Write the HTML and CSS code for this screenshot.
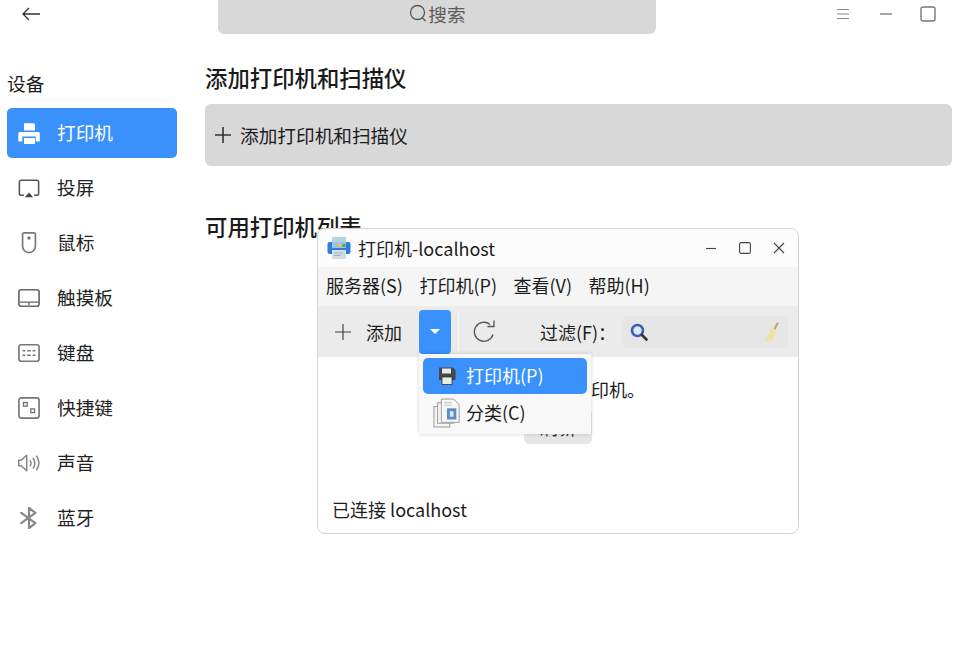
FILE: index.html
```html
<!DOCTYPE html>
<html lang="zh-CN">
<head>
<meta charset="utf-8">
<title>打印机</title>
<link rel="stylesheet" href="styles.css">
</head>
<body>
<div class="app">
  <aside class="sidebar">
    <div class="side-top">
      <svg class="back" viewBox="0 0 20 16" width="20" height="16"><path d="M19 8H2M8 2 2 8l6 6" fill="none" stroke="#333" stroke-width="1.300"/></svg>
    </div>
    <div class="side-title">设备</div>
    <nav class="nav">
      <a class="nav-item active">
        <svg class="nav-icon" viewBox="0 0 22 22"><path d="M6 1.300h10l1 1v6.200H6z" fill="#fff"/><path d="M1.800 10h18.500a1.500 1.500 0 0 1 1.500 1.500v8h-4v-5H4.300v5H.300v-8A1.500 1.500 0 0 1 1.800 10z" fill="#fff"/><rect x="6" y="16" width="11" height="6" fill="#fff"/></svg>
        <span>打印机</span>
      </a>
      <a class="nav-item">
        <svg class="nav-icon" viewBox="0 0 24 24"><path d="M6.500 20H3.500A2 2 0 0 1 1.500 18V5.500a2 2 0 0 1 2-2h17a2 2 0 0 1 2 2V18a2 2 0 0 1-2 2H17.500" fill="none" stroke="#555" stroke-width="1.700"/><path d="M12 17l4.500 5h-9z" fill="#444"/></svg>
        <span>投屏</span>
      </a>
      <a class="nav-item">
        <svg class="nav-icon" viewBox="0 0 24 24"><path d="M6.500 1h11a1.500 1.500 0 0 1 1.500 1.500v13a7 7 0 0 1-14 0v-13A1.500 1.500 0 0 1 6.500 1z" fill="none" stroke="#777" stroke-width="1.800"/><circle cx="12" cy="6.500" r="1.900" fill="#777"/></svg>
        <span>鼠标</span>
      </a>
      <a class="nav-item">
        <svg class="nav-icon" viewBox="0 0 24 24"><rect x="1" y="3" width="22" height="18" rx="2.500" fill="none" stroke="#666" stroke-width="1.800"/><path d="M2 16.500h20M12 16.500v3.500" stroke="#666" stroke-width="1.500"/></svg>
        <span>触摸板</span>
      </a>
      <a class="nav-item">
        <svg class="nav-icon" viewBox="0 0 24 24"><rect x="1" y="3" width="22" height="18" rx="2.500" fill="none" stroke="#777" stroke-width="1.800"/><path d="M5 9.500h3M10 9.500h4M16 9.500h3M5 14.500h3M10 14.500h4M16 14.500h3" stroke="#777" stroke-width="1.600"/></svg>
        <span>键盘</span>
      </a>
      <a class="nav-item">
        <svg class="nav-icon" viewBox="0 0 24 24"><rect x="1" y="1" width="22" height="22" rx="2.500" fill="none" stroke="#777" stroke-width="1.800"/><rect x="6" y="6" width="4" height="4" fill="none" stroke="#777" stroke-width="1.500"/><rect x="14" y="13" width="4" height="4" fill="none" stroke="#777" stroke-width="1.500"/></svg>
        <span>快捷键</span>
      </a>
      <a class="nav-item">
        <svg class="nav-icon" viewBox="0 0 24 24"><path d="M.800 9v6h2.700l6 5.500v-17L3.500 9z" fill="none" stroke="#888" stroke-width="1.700" stroke-linejoin="round"/><path d="M13 9c1.400 2 1.400 4.500 0 6.500M16.300 6.500c2.500 3.500 2.500 8 0 11.500M20 4c3.500 5 3.500 11 0 16" fill="none" stroke="#888" stroke-width="1.700"/></svg>
        <span>声音</span>
      </a>
      <a class="nav-item">
        <svg class="nav-icon" viewBox="0 0 24 24"><path d="M3.500 6.500 19 17.500 12 23V1l7 5.500L3.500 17.500" fill="none" stroke="#888" stroke-width="2.400" stroke-linejoin="round" stroke-linecap="round"/></svg>
        <span>蓝牙</span>
      </a>
    </nav>
  </aside>

  <main class="content">
    <header class="topbar">
      <div class="search">
        <svg viewBox="0 0 20 20" width="20" height="20"><circle cx="9.500" cy="9.500" r="7" fill="none" stroke="#555" stroke-width="1.300"/><path d="M14.500 15l3 3" stroke="#555" stroke-width="1.300"/></svg>
        <span>搜索</span>
      </div>
      <div class="win-controls">
        <svg viewBox="0 0 14 12" width="14" height="12"><path d="M1 1.500h12M1 6h12M1 10.500h12" stroke="#888" stroke-width="1.200"/></svg>
        <svg viewBox="0 0 14 12" width="14" height="12"><path d="M1 6h12" stroke="#777" stroke-width="1.300"/></svg>
        <svg viewBox="0 0 16 16" width="16" height="16"><rect x="1" y="1" width="14" height="14" rx="2" fill="none" stroke="#777" stroke-width="1.400"/></svg>
      </div>
    </header>
    <section class="panel">
      <h2 class="section-title">添加打印机和扫描仪</h2>
      <button class="add-button">
        <svg viewBox="0 0 16 16" width="16" height="16"><path d="M8 0v16M0 8h16" stroke="#333" stroke-width="1.600"/></svg>
        <span>添加打印机和扫描仪</span>
      </button>
      <h2 class="section-title list-title">可用打印机列表</h2>
    </section>
  </main>
</div>

<div class="window">
  <div class="titlebar">
    <svg class="app-icon" viewBox="0 0 24 24" width="24" height="24">
      <rect x="5" y="1" width="14" height="6" fill="#b5d3e6"/>
      <path d="M2.500 6h19A2 2 0 0 1 23.500 8v8a2 2 0 0 1-2 2h-19a2 2 0 0 1-2-2V8a2 2 0 0 1 2-2z" fill="#2f7fd8"/>
      <rect x="5" y="6" width="14" height="6" fill="#9cc3e6"/>
      <rect x="11" y="8" width="3.500" height="3" fill="#f0c040"/><rect x="15" y="8" width="3.500" height="3" fill="#45b36b"/>
      <rect x="5" y="14" width="14" height="9" fill="#d3dde4"/>
      <path d="M7 17h9M7 19.500h7" stroke="#9fb2c0" stroke-width="1"/>
    </svg>
    <span class="window-title">打印机-localhost</span>
    <div class="window-buttons">
      <svg viewBox="0 0 12 12" width="12" height="12"><path d="M1 6.500h10" stroke="#444" stroke-width="1.100"/></svg>
      <svg viewBox="0 0 12 12" width="12" height="12"><rect x=".6" y=".6" width="10.800" height="10.800" rx="1.500" fill="none" stroke="#444" stroke-width="1.100"/></svg>
      <svg viewBox="0 0 12 12" width="12" height="12"><path d="M1 1l10 10M11 1 1 11" stroke="#444" stroke-width="1.100"/></svg>
    </div>
  </div>
  <div class="menubar">
    <span>服务器(S)</span><span>打印机(P)</span><span>查看(V)</span><span>帮助(H)</span>
  </div>
  <div class="toolbar">
    <svg class="tool-plus" viewBox="0 0 16 16" width="16" height="16"><path d="M8 0v16M0 8h16" stroke="#444" stroke-width="1.200"/></svg>
    <span class="tool-add">添加</span>
    <div class="drop-button"><i class="caret"></i></div>
    <div class="tool-sep"></div>
    <svg class="tool-refresh" viewBox="0 0 24 24" width="24" height="24"><path d="M20 14.500A9.500 9.500 0 1 1 17 4.500" fill="none" stroke="#555" stroke-width="1.300"/><path d="M14.500 6.500H21V0.500" fill="none" stroke="#555" stroke-width="1.300"/></svg>
    <span class="filter-label">过滤(F)：</span>
    <div class="filter-box">
      <svg viewBox="0 0 18 18" width="18" height="18"><circle cx="7.500" cy="7.500" r="5.500" fill="#dbe6f7" stroke="#3a5fb0" stroke-width="2.600"/><path d="M12 12l4.500 4.500" stroke="#333" stroke-width="2.600" stroke-linecap="round"/></svg>
      <svg viewBox="0 0 18 20" width="18" height="20"><path d="M12.500 7 15.500 1.500" stroke="#c9a878" stroke-width="2.400" stroke-linecap="round"/><path d="M9.500 5.500c2 0 4 2 4.500 3.500-.5 4-3 8-4 9-2 .5-6 .5-8 0 3-2.500 5-5 7.500-12.500z" fill="#efe3a0"/></svg>
    </div>
  </div>
  <div class="window-body">
    <div class="empty-text">没有配置打印机。</div>
    <button class="refresh-button">刷新</button>
    <div class="status">已连接 localhost</div>
  </div>
  <div class="popup">
    <div class="popup-item selected">
      <svg viewBox="0 0 20 20" width="20" height="20"><path d="M2 1.500h14l2.500 2.500v10H2z" fill="#44484c"/><rect x="5" y="2.500" width="9" height="5" fill="#e8e8e8"/><rect x="5" y="11" width="10" height="7.500" fill="#e6f0de" stroke="#333" stroke-width=".8"/></svg>
      <span>打印机(P)</span>
    </div>
    <div class="popup-item">
      <svg class="docs" viewBox="0 0 30 32" width="28" height="30"><rect x="1" y="9" width="17" height="22" fill="#f4f4f4" stroke="#999"/><rect x="5" y="5" width="17" height="22" fill="#f4f4f4" stroke="#999"/><path d="M9 1h13l6 6v19H9z" fill="#f6f6f6" stroke="#999"/><path d="M12 5h8M12 7.500h8" stroke="#bbb"/><rect x="15" y="11" width="10" height="12" fill="#5b8cc4"/><rect x="18" y="14" width="4" height="6" fill="#dbe6f2"/></svg>
      <span>分类(C)</span>
    </div>
  </div>
</div>
</body>
</html>
```
FILE: styles.css
```css
* { box-sizing: border-box; }
html, body { margin: 0; height: 100%; overflow: hidden; background: #fff; }
body {
  font-family: "Noto Sans CJK SC", "Noto Sans", sans-serif;
  color: #1c1c1c;
  width: 957px;
  height: 655px;
  position: relative;
}
.app { display: flex; height: 655px; }
.sidebar { width: 205px; padding-left: 7px; flex: none; }
.side-top { height: 70px; padding: 6px 0 0 14px; }
.back { display: block; }
.side-title { font-size: 18.67px; line-height: 28px; margin-top: -1px; margin-bottom: 11px; }
.nav { display: flex; flex-direction: column; gap: 5px; width: 170px; }
.nav-item {
  display: flex; align-items: center; height: 50px; border-radius: 5px;
  padding-left: 11px; gap: 17px; font-size: 18.67px; color: #222;
}
.nav-item span { line-height: 26px; margin-bottom: 2px; }
.nav-item.active { background: #3a91fb; color: #fff; }
.nav-icon { width: 22px; height: 22px; flex: none; }
.content { flex: 1; min-width: 0; }
.topbar { display: flex; height: 64px; align-items: flex-start; }
.search {
  width: 438px; height: 34px; margin-left: 13px; margin-right: 180px;
  background: #d8d8d8; border-radius: 0 0 6px 6px;
  display: flex; align-items: center; justify-content: center;
  font-size: 18.67px; color: #5c5c5c; padding-bottom: 8px;
}
.win-controls { display: flex; align-items: center; gap: 29px; padding-top: 6px; }
.win-controls svg:last-child { margin-left: -2px; }
.panel { padding-right: 5px; }
.section-title { font-size: 22.4px; line-height: 30px; font-weight: 500; margin: -2px 0 12px; color: #1a1a1a; }
.add-button {
  display: flex; align-items: center; width: 100%; height: 62px; border: 0;
  background: #d8d8d8; border-radius: 6px; padding: 0 0 0 10px; gap: 9px;
  font: inherit; font-size: 18.67px; color: #1c1c1c;
}
.add-button span { margin-bottom: 2px; }
.section-title.list-title { margin-top: 45px; }

.window {
  position: absolute; left: 317px; top: 228px; width: 482px; height: 306px;
  background: #fff; border: 1px solid #d4d4d4; border-radius: 8px;
  display: flex; flex-direction: column;
}
.titlebar {
  height: 38px; background: #fcfcfc; border-radius: 8px 8px 0 0; flex: none;
  display: flex; align-items: center; padding: 0 13px 0 9px;
}
.app-icon { flex: none; }
.window-title { margin-left: 7px; font-size: 18px; flex: 1; }
.window-buttons { display: flex; gap: 22px; align-items: center; }
.menubar {
  height: 39px; flex: none; background: #f5f5f5;
  display: flex; align-items: center; gap: 16.5px; padding: 0 0 4px 8px; font-size: 18px;
}
.toolbar {
  height: 51px; flex: none; background: #ebebeb;
  display: flex; align-items: center; font-size: 18px;
}
.tool-plus { margin-left: 17px; }
.tool-add { margin-left: 15px; }
.drop-button {
  width: 32px; height: 44px; background: #3a91fb; border-radius: 4px;
  margin-left: 17px; display: flex; align-items: center; justify-content: center;
}
.caret { width: 0; height: 0; border: 5px solid transparent; border-top-color: #fff; border-bottom-width: 0; }
.tool-sep { width: 1px; height: 42px; background: #f7f7f7; margin-left: 7px; }
.tool-refresh { margin-left: 14px; }
.filter-label { margin-left: 43px; }
.filter-box {
  width: 166px; height: 32px; margin-left: 6px; background: #e6e6e6; border-radius: 5px;
  display: flex; align-items: center; justify-content: space-between; padding: 0 8px;
}
.window-body { flex: 1; display: flex; flex-direction: column; align-items: center; position: relative; }
.empty-text { font-size: 18px; line-height: 26px; margin-top: 19px; margin-left: 30px; }
.refresh-button {
  margin-top: 7px; width: 68px; height: 35px; border: 0; background: #e6e6e6;
  border-radius: 5px; font: inherit; font-size: 18px; color: #333; padding: 0;
}
.status { position: absolute; left: 14px; bottom: 11px; font-size: 18px; }
.popup {
  position: absolute; left: 101px; top: 125px; width: 172px; height: 80px;
  background: #f8f8f8; box-shadow: 0 0 4px rgba(0,0,0,.18);
  padding: 4px; display: flex; flex-direction: column;
  font-size: 18px;
}
.popup-item { height: 36px; flex: none; display: flex; align-items: center; border-radius: 5px; padding-left: 14px; gap: 9px; }
.popup-item span { line-height: 26px; }
.popup-item.selected { background: #3a91fb; color: #fff; }
.popup-item.selected span { margin-bottom: 2px; }
.popup-item:not(.selected) span { margin-left: -1px; margin-bottom: 1px; }
.docs { margin-left: -4px; margin-right: -3px; margin-top: 1px; }
```
